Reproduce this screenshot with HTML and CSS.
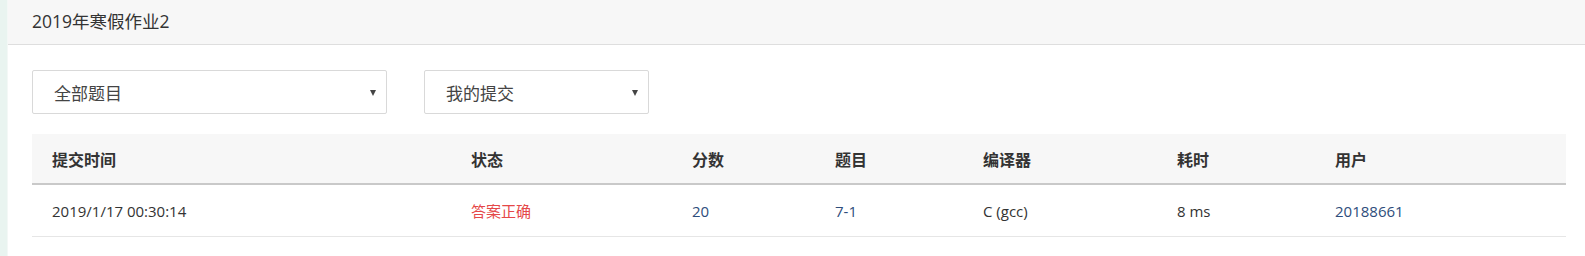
FILE: index.html
```html
<!DOCTYPE html>
<html lang="zh-CN">
<head>
<meta charset="utf-8">
<title>2019年寒假作业2</title>
<link rel="stylesheet" href="styles.css">
</head>
<body>
<div class="page">
  <div class="rail"></div>
  <div class="main">
    <div class="header"><span class="title">2019年寒假作业2</span></div>
    <div class="content">
      <div class="filters">
        <div class="select select-wide"><span>全部题目</span><span class="caret"></span></div>
        <div class="select select-narrow"><span>我的提交</span><span class="caret"></span></div>
      </div>
      <table class="subs">
        <colgroup>
          <col class="c1"><col class="c2"><col class="c3"><col class="c4"><col class="c5"><col class="c6"><col class="c7">
        </colgroup>
        <thead>
          <tr><th>提交时间</th><th>状态</th><th>分数</th><th>题目</th><th>编译器</th><th>耗时</th><th>用户</th></tr>
        </thead>
        <tbody>
          <tr>
            <td>2019/1/17 00:30:14</td>
            <td class="ok">答案正确</td>
            <td class="link">20</td>
            <td class="link">7-1</td>
            <td>C (gcc)</td>
            <td>8 ms</td>
            <td class="link">20188661</td>
          </tr>
        </tbody>
      </table>
    </div>
  </div>
</div>
</body>
</html>
```
FILE: styles.css
```css
html, body {
  margin: 0;
  padding: 0;
  background: #ffffff;
  width: 100%;
  height: 100%;
  overflow: hidden;
}
body {
  font-family: "Open Sans", "Noto Sans CJK SC", sans-serif;
  font-size: 15px;
  color: #333333;
}
.page {
  display: flex;
  height: 100%;
  width: 100%;
}
.rail {
  width: 7px;
  background: #e9f4f0;
  border-right: 1px solid #f3f8f6;
  flex: none;
}
.main {
  flex: 1;
  min-width: 0;
}
.header {
  height: 45px;
  background: #f7f7f7;
  border-bottom: 1px solid #dedede;
  box-sizing: border-box;
  display: flex;
  align-items: center;
  padding-left: 24px;
}
.title {
  font-size: 17.5px;
  color: #333;
  margin-top: -3px;
}
.content {
  padding: 25px 0 0 24px;
}
.filters {
  display: flex;
  gap: 37px;
  margin-bottom: 20px;
}
.select {
  height: 44px;
  box-sizing: border-box;
  border: 1px solid #d9d9d9;
  border-radius: 2px;
  display: flex;
  align-items: center;
  justify-content: space-between;
  padding: 0 10px 0 21px;
  font-size: 17px;
  color: #444;
}
.select-wide { width: 355px; }
.select-narrow { width: 225px; }
.caret {
  width: 0;
  height: 0;
  border-left: 3.5px solid transparent;
  border-right: 3.5px solid transparent;
  border-top: 6px solid #444;
  margin-top: 1px;
}
.subs {
  width: 1534px;
  border-collapse: collapse;
  table-layout: fixed;
}
.c1 { width: 419px; }
.c2 { width: 221px; }
.c3 { width: 143px; }
.c4 { width: 148px; }
.c5 { width: 194px; }
.c6 { width: 158px; }
.c7 { width: 251px; }
.subs th {
  background: #f7f7f7;
  height: 49px;
  text-align: left;
  font-weight: bold;
  font-size: 16px;
  padding: 0 0 0 20px;
  border-bottom: 2px solid #c9c9c9;
  color: #333;
}
.subs td {
  height: 51px;
  padding: 0 0 0 20px;
  border-bottom: 1px solid #e6e6e6;
  color: #333;
  font-size: 15px;
}
.subs td.ok { color: #e54848; }
.subs td.link { color: #2e4d7b; }
```
